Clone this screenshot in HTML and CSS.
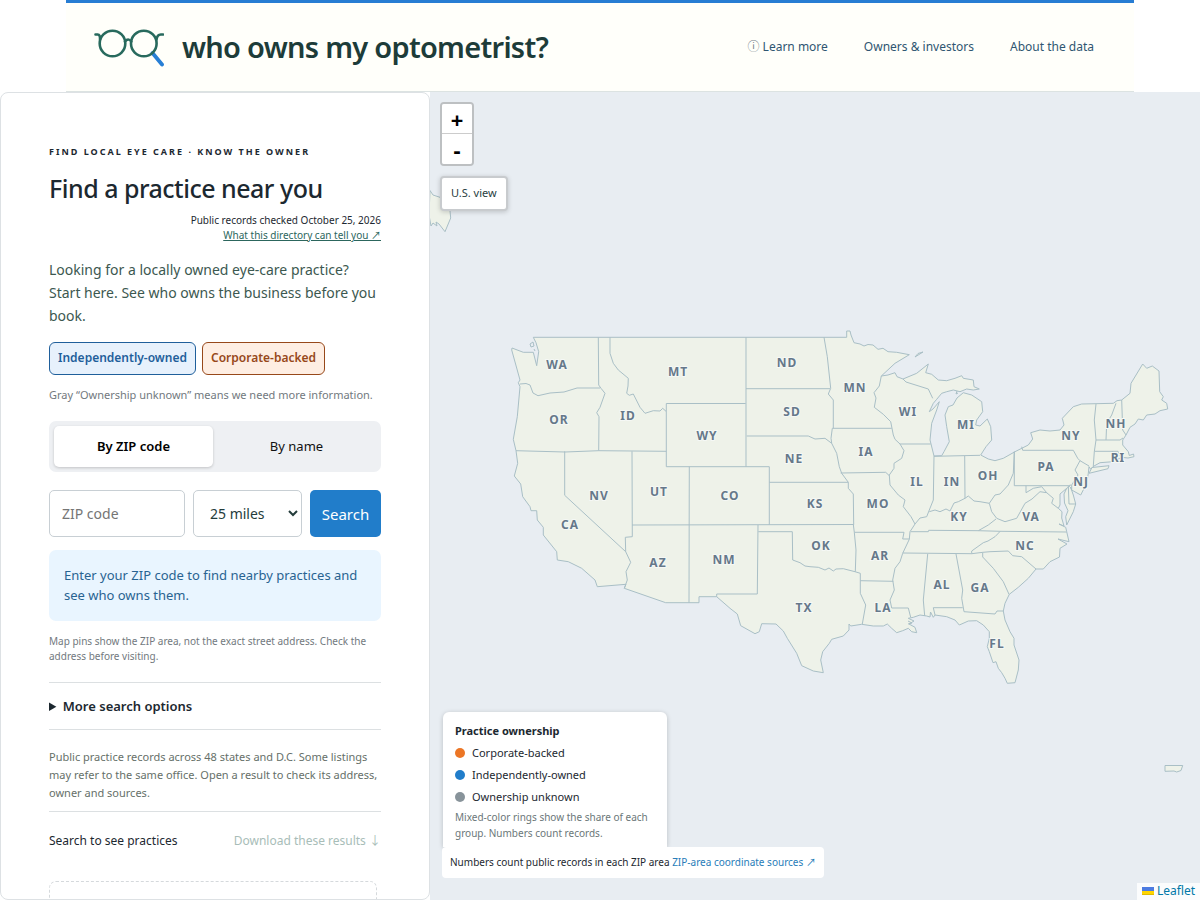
FILE: index.html
```
<!DOCTYPE html>
<html lang="en">
<head>
<meta charset="utf-8">
<meta name="viewport" content="width=device-width, initial-scale=1">
<title>who owns my optometrist?</title>
<link rel="stylesheet" href="styles.css">
</head>
<body>
<header class="site-header">
  <a class="brand" href="#">
    <svg class="brand-logo" viewBox="0 0 70 39" aria-hidden="true">
      <path d="M58.500 25l9.500 11.500" stroke="#287fd5" stroke-width="3.800" stroke-linecap="round"/>
      <g fill="none" stroke="#286a5d" stroke-width="2.6" stroke-linecap="round">
        <circle cx="18.5" cy="15.5" r="12.8"/>
        <circle cx="49.8" cy="15.5" r="12.8"/>
        <path d="M31 13.500q3.200-4 6.300 0M1.500 6.500h2.200q2.600 0 2.300 5M69 6.500h-2.200q-3.600 0-4.300 5"/>
      </g>
    </svg>
    <span class="brand-name">who owns my optometrist?</span>
  </a>
  <nav class="site-nav">
    <a href="#"><span class="info">ⓘ</span> Learn more</a>
    <a href="#">Owners &amp; investors</a>
    <a href="#">About the data</a>
  </nav>
</header>
<main class="layout">
  <section class="panel">
    <p class="eyebrow">Find local eye care · Know the owner</p>
    <h1 class="title">Find a practice near you</h1>
    <p class="meta">Public records checked October 25, 2026<br><a href="#">What this directory can tell you ↗</a></p>
    <p class="intro">Looking for a locally owned eye-care practice? Start here. See who owns the business before you book.</p>
    <div class="tags">
      <span class="tag tag-independent">Independently-owned</span>
      <span class="tag tag-corporate">Corporate-backed</span>
    </div>
    <p class="note">Gray “Ownership unknown” means we need more information.</p>
    <div class="tabs">
      <button class="tab tab-active" type="button">By ZIP code</button>
      <button class="tab" type="button">By name</button>
    </div>
    <form class="search">
      <input class="field" type="text" placeholder="ZIP code" aria-label="ZIP code">
      <select class="field field-select" aria-label="Distance"><option>25 miles</option><option>50 miles</option></select>
      <button class="search-button" type="button">Search</button>
    </form>
    <p class="hint">Enter your ZIP code to find nearby practices and see who owns them.</p>
    <p class="caveat">Map pins show the ZIP area, not the exact street address. Check the address before visiting.</p>
    <details class="more"><summary>More search options</summary></details>
    <p class="coverage">Public practice records across 48 states and D.C. Some listings may refer to the same office. Open a result to check its address, owner and sources.</p>
    <div class="results-head">
      <span>Search to see practices</span>
      <button class="download" type="button" disabled>Download these results ↓</button>
    </div>
    <div class="results-empty"></div>
  </section>
  <section class="map" aria-label="Map">
    <svg class="map-canvas" viewBox="430 92 770 808" preserveAspectRatio="xMidYMid slice">
      <g class="land">
        <path d="M533.3 337.300H846.700V331H850L851 335 854 342.700 860 344 864 346 868 344.500 873 345 878 349.300 883 348.300 888 351.700 896.700 352.300 909.300 354.700 895 363.300 881.300 376 888 375 895 372.700 897 376.700 903 379 916.700 373.300 928.300 364 926.500 370 925.700 372.700 931.700 374.300 938.300 380 946.700 380.700 955 378.300 961.700 375.700 963.300 378.300 973.300 380 974 386.700 979.300 389 973.300 390 966.700 389 960 391.700 953.300 390 946.700 391.700 941.700 393.300 936.700 399.300 933.300 403.300 929.300 411.700 933 409 939.300 401.700 936.700 410 931.700 423.300 930 440 934 456 941.700 455.700 944 451.700 949.300 441.700 946.700 426.700 945 415 948.300 406.700 953 405 957 398 963.300 392.700 971.700 395 981.700 401.700 982.700 411.700 976.700 420 975.700 425 980 426 987.300 419 990.700 426.700 991.700 440 986 446.700 980.700 455 988.300 459 995 460.700 1003.300 458.300 1015 451.700 1028.300 445 1032.700 439 1030.700 432.700 1040 430 1050 431 1060 430 1064 425 1062.300 418.300 1073.300 406.700 1081.700 404 1113.300 403.300 1117 400.700 1121.700 400 1130 393.300 1131 383.300 1142.700 364 1146.700 368.300 1152.300 366 1159 371 1159.700 391.700 1163.300 396.700 1161.700 400 1166.700 403.300 1167.700 409 1160 410.700 1155 414 1146.700 415 1143.300 420 1138.300 419 1135 424 1130 427.300 1126 435 1122.700 440 1122.700 445 1128.300 451.700 1129.300 455.500 1133.500 454 1134 456.700 1128 458 1121.700 457.300 1113 461.700 1100 462.700 1094 466 1090.500 469 1089 466.700 1088.300 473.300 1086.700 483.300 1080.700 495 1071.700 490 1070.500 487 1073.300 495 1075.700 504 1073.300 511.700 1066.700 525 1065.700 516.700 1068 510.700 1064.500 503 1064 494 1066.700 488.300 1060 494 1060 505 1058.300 508.300 1062 511.700 1061.700 518 1064 526 1059 524 1065.700 527.300 1066.700 531.700 1069 541.700 1058 539 1067 544 1060 548.300 1059.500 557 1050 561.700 1043.300 569 1036 569 1028.300 578.300 1018.300 587.300 1009.300 594.300 1005 603.300 1003.300 611 1005 620 1010 631.700 1014 638.300 1014 645 1019 660 1018.300 670 1015 682.700 1007.300 683.300 1005 678.300 1001.700 672.700 998.300 668.300 996 661.700 993 662.700 989.300 651.700 987.300 646.700 989.300 638.300 989.300 631.700 983.300 625 976.700 620.700 968.300 621 959.300 625 955 620 946.700 616.700 935 615 933.300 617.300 930.500 612 930 617 926.700 616 920 615 913.300 617.300 908.300 618.300 914 621 909 624 915 627.300 916.700 632.700 911.700 631.700 908.300 628.300 902.700 630.700 896.700 632.700 891.700 628.300 887.300 624 883.300 626 873.300 626 861.700 624.300 850.700 626 849 624 849 630 843.300 636 831.700 639.300 829.300 643.300 822.700 651.700 820.700 660 823.300 672.700 813.300 671 801.700 665.700 796.700 653.300 787.300 638.300 783.300 631 776 624 761.700 623.700 759.300 631.700 755 633.700 740.700 625.700 737.300 614 730 608.300 716.700 596.700H699V602.700H665.700L624.300 588.300 626 584.300 597.300 586.700 595 580 581.700 568.300 568.300 561.700 557.300 560 556.700 551.700 543.300 535 543.300 527.300 537.300 520 536.700 510.700 531 510.700 530 506.700 522.700 496.700 520.700 484 514.300 476 517.700 463.300 516 450.700 513.300 439.300 517.300 416.700 520 386.700 518.300 382.700 520 380 511.700 350 512 348 523.300 352.300 533.300 352.300 536.700 365.700 538.700 351.700 536 342.700Z"/>
        <path d="M1089 473.300L1108 468.700 1109 465.700 1092 467.500ZM915 357L918 353.500 923 352ZM430 190.500L433 195 440 197.300 450 211 450.700 218 445 231.700 439 224 436 222 437 226 433 223 431 226 429 215ZM1165 765.500H1182.700L1181 770.500 1176.700 772 1174 771 1165 771.300Z"/>
      </g>
      <path class="borders" d="M520 384L526 383.500 530 385 533 393 538 395.700 550 393 564 392 577 388H600M598.300 337.300L598.700 385 601 388.300 605 393.300 600 407.300 596.700 412.700 599 416.700 598.700 450.700M516 450.700L565 452 598.700 450.700 666.300 451.300M610 337.300V353.300L613.300 363.300 618.300 370 628.300 378.300 628 386 626.700 393.300 629.300 395.300 633.300 394 640 407.300 645 413.300 653.300 410.700 660 411 662.700 408.300 666 411.300M666.300 403.500H745.700M666.300 403.500V466.700H769.300V524.700M746 337.300V466.700M746 388.700H830M824 337.300L827.300 356.700 830.700 388.300 828.300 394 833.300 400V428.300M832.300 428.300H891.700M881.300 376L879.300 386 874 392.700 876 398 874.300 407.300 883.300 414.300 890.700 421.700 893.300 435 895 439.300 900 444 904 450.700 901.700 458.300 894 463.300 894 468.300 889.300 475 890 485 898.300 495 905 500 903.300 506.700 911 516.700 915 524 910 531.700 909.300 539.300 902.700 553.300 900 561.700 895 568.300 892.700 580 894.300 590 890 600 891.700 608H908.300L910.700 617.300M900 444H930.700M903 379L906 382 928.300 389 932.700 398.300M746.700 436H808.300L815 439 825 438.300 831.700 443.300M832.300 428.300L831 438.300 831.700 443.300 836.700 453.300 839.300 466.700 841.700 473.300 848.300 482.300V488.300L853.300 494 853.700 524.700M840.700 473L885.700 472.300 889.300 475.700M769.300 482.300H848.300M689.300 466.700L689 602.700M632 451.300L632.300 536.700 625.300 537.300 625.700 551.700 630.700 562.300 626 571.700 627.300 580 624.300 588.300M632 525L853.700 524.500M564.700 451.300V495.300L625.700 551.700M758 525L757.300 594H716.700V596.700M758.300 531.700H792.300L792.700 560 800 562.700 805 566 810 566.700 818.300 567.300 825 570 829 568 833.300 571 836 569 843.300 568.700 855 571.700 860.300 573.300V593.300L865.700 605 862.300 624M853.300 524.300L854.300 532.300 856 550 855.300 571.700M854.300 532.300H904L902.700 539H909.300M860.300 580.700L893.300 581.300M910.700 531.700H928.300L928.700 530.300 978.300 530.700 1000 531.300 1066.700 532M978.300 530.700L988.300 525 996 519M902.700 553L971.700 553.700 983 552.300 990 551.700 1008.300 551 1012.700 555.700 1021.700 556.700 1036 569M971.700 553.700V551L983.300 542.700 988 541 995 536.700 1000 531.500M982.700 553V557L993.300 568.300 1003.300 581.700 1009 594.300M956 554L962.700 590 961.700 598.300 964 611.700 995 614 997 611 1003.300 611M962.700 607.700H933.300L935 615M927.700 554L923.300 600 924.700 616M934 456L933.300 500 929.300 510 926.700 516.700 920 518 915 524M929.300 511.700L935 510 940 511.700 946 509 950 511 954 503 958.300 501.700 965 498.300 968.300 496 974 501 980 501.700 989.300 503.300 995 495 1000 494 1008.300 485 1013.300 473.300 1014.300 451.700M964.700 456L965 498.300M934 456.300L980 455.300M989.300 503.300L991.700 511.700 996.700 518.300 1005 521.700 1016.700 518.300 1025 503.300 1032 499 1040 491.700 1046.700 492.700M1014.300 451.700V485.700H1068.300L1071 485M1026 485.700V492.700L1033.300 488.300 1041.700 486.700 1046.700 492.700 1053.300 498.300 1051.700 503.300 1058.300 508.300M1068.300 485.700L1069 504H1075.700M1021.700 446.700L1022.700 450.300H1073.300L1077.700 458.300 1080 460.700 1075 470 1078 475 1071.700 485V490M1080 460.700L1089 466M1096 404L1094.300 420 1096 440 1094.300 451.700 1093.300 466M1116 403.300L1111.700 415 1106.700 423.300 1106 440M1096 440H1120L1123 438M1094.300 451.300H1118L1121 457M1112.300 451.300V462M1121.700 400L1122.700 430 1126 435M1066.700 488.300L1070 486M530 344L533 342 534 346 531 347ZM534 349L535 351M957 391L956 394 958 393M908 621L912 623 908 624"/>
      <g class="labels">
        <text x="557" y="369">WA</text><text x="559" y="424">OR</text><text x="628" y="420">ID</text><text x="678" y="376">MT</text><text x="707" y="440">WY</text><text x="787" y="367">ND</text><text x="792" y="416">SD</text><text x="794" y="463">NE</text><text x="855" y="392">MN</text><text x="908" y="416">WI</text><text x="966" y="429">MI</text><text x="866" y="456">IA</text><text x="917" y="486">IL</text><text x="952" y="486">IN</text><text x="988" y="480">OH</text><text x="1046" y="471">PA</text><text x="1071" y="440">NY</text><text x="1116" y="428">NH</text><text x="1118" y="462">RI</text><text x="1081" y="486">NJ</text><text x="1031" y="521">VA</text><text x="959" y="521">KY</text><text x="1025" y="550">NC</text><text x="878" y="508">MO</text><text x="815" y="508">KS</text><text x="730" y="500">CO</text><text x="659" y="496">UT</text><text x="599" y="500">NV</text><text x="570" y="529">CA</text><text x="658" y="567">AZ</text><text x="724" y="564">NM</text><text x="821" y="550">OK</text><text x="880" y="560">AR</text><text x="942" y="589">AL</text><text x="980" y="592">GA</text><text x="883" y="612">LA</text><text x="804" y="612">TX</text><text x="997" y="648">FL</text>
      </g>
    </svg>
    <div class="map-controls">
      <div class="zoom">
        <button type="button" aria-label="Zoom in">+</button>
        <button type="button" aria-label="Zoom out">-</button>
      </div>
      <button class="us-view" type="button">U.S. view</button>
    </div>
    <div class="map-footer">
      <div class="legend">
        <h2>Practice ownership</h2>
        <ul>
          <li><i class="dot dot-corporate"></i>Corporate-backed</li>
          <li><i class="dot dot-independent"></i>Independently-owned</li>
          <li><i class="dot dot-unknown"></i>Ownership unknown</li>
        </ul>
        <p>Mixed-color rings show the share of each group. Numbers count records.</p>
      </div>
      <p class="source">Numbers count public records in each ZIP area <a href="#">ZIP-area coordinate sources ↗</a></p>
    </div>
    <a class="attribution" href="#"><svg width="12" height="8" viewBox="0 0 12 8" aria-hidden="true"><path fill="#4c7be1" d="M0 0h12v4H0z"/><path fill="#ffd500" d="M0 4h12v3H0z"/><path fill="#e0bc00" d="M0 7h12v1H0z"/></svg> Leaflet</a>
  </section>
</main>
</body>
</html>
```
FILE: styles.css
```
* { box-sizing: border-box; }
body {
  margin: 0;
  height: 100vh;
  display: flex;
  flex-direction: column;
  overflow: hidden;
  background: #fff;
  color: #1c2830;
  font-family: "Noto Sans", "Noto Sans CJK JP", sans-serif;
  font-size: 12px;
}
p, h1, h2, ul { margin: 0; padding: 0; }
button, input, select { font: inherit; color: inherit; }

.site-header {
  width: 89%;
  flex: 0 0 92px;
  margin: 0 auto;
  padding: 0 40px 0 28px;
  display: flex;
  align-items: center;
  justify-content: space-between;
  background: #fffffa;
  border-top: 3px solid #287dd3;
  border-bottom: 1px solid #dce3e2;
}
.brand { display: flex; align-items: center; gap: 18px; text-decoration: none; color: #1d3c39; }
.brand-logo { width: 70px; height: 39px; }
.brand-name { font-size: 29px; font-weight: 600; line-height: 40px; letter-spacing: -0.025em; }
.site-nav { display: flex; gap: 36px; line-height: 18px; }
.site-nav a { color: #2f5671; text-decoration: none; }
.info { color: #6f7d86; }

.layout { flex: 1; min-height: 0; display: grid; grid-template-columns: 430px 1fr; }
.panel {
  padding: 50px 48px 0;
  overflow: hidden;
  background: #fff;
  border: 1px solid #dde1e4;
  border-radius: 8px;
}
.eyebrow { font-size: 9px; font-weight: 700; line-height: 18px; letter-spacing: 2px; text-transform: uppercase; }
.title { margin-top: 9px; font-size: 25px; font-weight: 500; line-height: 36px; letter-spacing: -0.02em; }
.meta { margin-top: 7px; font-size: 10px; line-height: 15px; text-align: right; }
.meta a { color: #2c665d; }
.intro { margin-top: 15px; font-size: 14px; line-height: 23px; color: #3c5850; }
.tags { margin-top: 15px; display: flex; gap: 6px; }
.tag { padding: 0 8px 2px; border: 1px solid; border-radius: 6px; font-weight: 600; line-height: 29px; }
.tag-independent { color: #1f5f9b; background: #e7f1fc; }
.tag-corporate { color: #97481a; background: #feeee3; }
.note { margin-top: 11px; font-size: 11px; line-height: 18px; color: #72797e; }
.tabs { margin-top: 17px; padding: 5px; display: grid; grid-template-columns: 1fr 1fr; gap: 4px; border-radius: 7px; background: #eef0f3; }
.tab { height: 41px; padding: 0 0 2px; border: 0; border-radius: 5px; background: none; font-size: 13px; color: #111; }
.tab-active { background: #fff; font-weight: 600; color: #000; box-shadow: 0 1px 3px #00000030; }
.search { margin-top: 18px; display: grid; grid-template-columns: 136fr 109fr 71px; gap: 8px; }
.field { min-width: 0; width: 100%; height: 47px; padding: 0 12px; border: 1px solid #c8cfd4; border-radius: 5px; background: #fff; font-size: 14px; color: #243c3b; }
.field::placeholder { color: #757575; }
.field-select { padding: 0 0 0 12px; }
.search-button { padding: 0; border: 0; border-radius: 5px; background: #217dca; color: #fff; font-size: 15px; }
.hint { margin-top: 13px; padding: 15px 15px 16px; border-radius: 7px; background: #e9f5ff; color: #286391; font-size: 13px; line-height: 20px; }
.caveat { margin-top: 13px; font-size: 10px; line-height: 15px; color: #72797e; }
.more { margin-top: 18px; border: solid #dce0e2; border-width: 1px 0; font-size: 13px; font-weight: 600; line-height: 46px; }
.coverage { padding: 18px 0 9px; border-bottom: 1px solid #dce0e2; font-size: 11px; line-height: 18px; color: #667069; }
.results-head { display: flex; justify-content: space-between; margin-top: 18px; line-height: 22px; }
.download { padding: 0; border: 0; background: none; color: #a8bdb8; line-height: 22px; }
.results-empty { margin: 29px 4px 0 0; height: 120px; border: 1px dashed #d5d9dc; border-radius: 7px; }

.map { position: relative; overflow: hidden; background: #e8edf2; }
.map-canvas { position: absolute; inset: 0; width: 100%; height: 100%; }
.land { fill: #eef2e9; stroke: #a9bfc6; stroke-width: 1; stroke-linejoin: round; }
.borders { fill: none; stroke: #a9bfc6; stroke-width: 1; stroke-linejoin: round; }
.labels { font-size: 12px; font-weight: 700; letter-spacing: 1px; text-anchor: middle; fill: #66788a; stroke: #f5f8f5; stroke-width: 2px; paint-order: stroke; }
.map-controls { position: absolute; top: 10px; left: 10px; display: flex; flex-direction: column; align-items: flex-start; gap: 10px; }
.zoom { width: 34px; border: 2px solid #bdc0c2; border-radius: 4px; overflow: hidden; }
.zoom button { display: block; width: 30px; height: 30px; padding: 0; border: 0; background: #fff; color: #000; font-size: 22px; font-weight: 700; line-height: 30px; }
.zoom button:first-child { border-bottom: 1px solid #ccc; }
.us-view { height: 35px; padding: 0 9px 2px; border: 2px solid #c8cbce; border-radius: 4px; background: #fff; color: #28403f; font-size: 11px; box-shadow: 0 1px 5px #00000030; }
.map-footer { position: absolute; left: 12px; bottom: 22px; display: flex; flex-direction: column; align-items: flex-start; }
.legend { width: 224px; margin-left: 1px; padding: 10px 12px 6px; border-radius: 6px 6px 0 0; background: #fff; box-shadow: 0 1px 5px #0003; font-size: 11px; }
.legend h2 { font-size: 11px; font-weight: 700; line-height: 18px; }
.legend ul { margin: 2px 0 1px; list-style: none; }
.legend li { display: flex; align-items: center; gap: 7px; line-height: 22px; }
.legend p { font-size: 10px; line-height: 16px; color: #6b7779; }
.dot { width: 10px; height: 10px; border-radius: 50%; }
.dot-corporate { background: #ec7625; }
.dot-independent { background: #217dca; }
.dot-unknown { background: #88939a; }
.source { position: relative; padding: 8px 8px; border-radius: 4px; background: #fff; font-size: 10px; line-height: 15px; }
.source a { color: #287db9; text-decoration: none; }
.attribution { position: absolute; right: 0; bottom: 0; padding: 0 5px 2px; background: #fffc; color: #0078a8; font-size: 12px; line-height: 15px; text-decoration: none; }
```
